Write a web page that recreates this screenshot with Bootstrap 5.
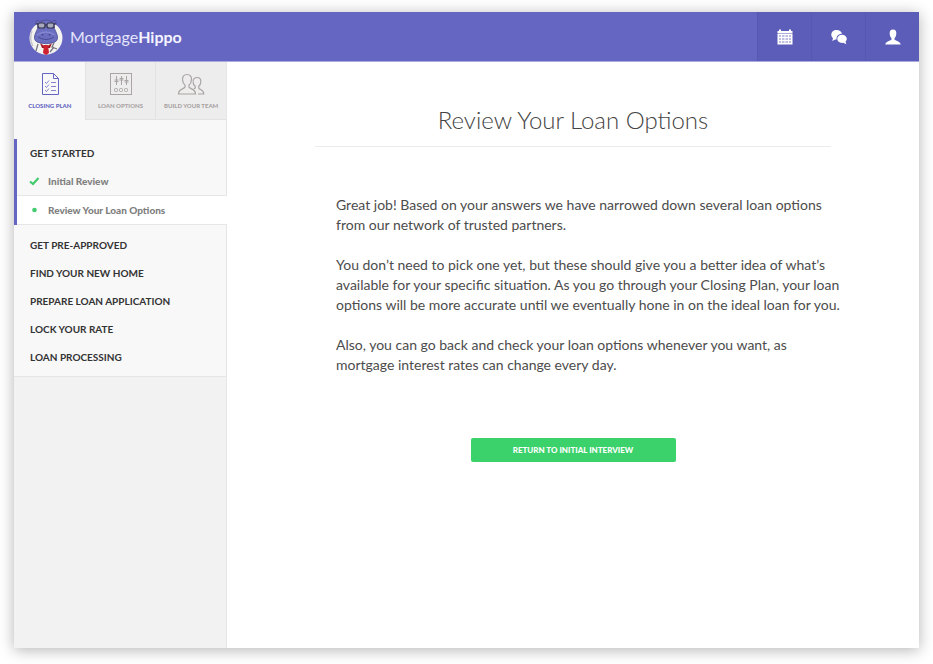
<!DOCTYPE html>
<html lang="en">
<head>
<meta charset="utf-8">
<meta name="viewport" content="width=device-width, initial-scale=1">
<title>MortgageHippo - Review Your Loan Options</title>
<link href="https://cdn.jsdelivr.net/npm/bootstrap@5.3.0/dist/css/bootstrap.min.css" rel="stylesheet">
<style>
body { font-family: Lato, "Open Sans", sans-serif; background: #fff; color: #4c4c4c; }
.app-shell { min-height: calc(100vh - 28px); margin: 12px 14px 16px; box-shadow: 0 2px 14px rgba(0,0,0,.3); background: #fff; }
.topbar { background: #6466c2; height: 50px; border-bottom: 1px solid #a9aae0; }
.brand { color: #e4e4fa; font-size: 16px; font-weight: 400; gap: 6px; padding-left: 14px; }
.brand:hover { color: #fff; }
.brand b { font-weight: 700; color: #f4f4ff; }
.top-action { width: 54px; background: #5c5db9; border: 0; border-left: 1px solid #5657b0; color: #fff; padding: 0 0 2px; }
.side { width: 213px; background: #f2f2f2; border-right: 1px solid #e6e6e6; }
.tab-link { height: 58px; gap: 6px; padding-top: 10px; background: #ededed; border-left: 1px solid #e2e2e2; border-bottom: 1px solid #e2e2e2; color: #aaa4a4; font-size: 6px; line-height: 8px; font-weight: 900; white-space: nowrap; }
.tab-link.current { background: #f8f8f8; border-color: #f8f8f8; color: #6466c2; }
.plan { background: #f8f8f8; border-bottom: 1px solid #e6e6e6; padding: 19px 0 5px; }
.stage-open { border-left: 3px solid #6466c2; margin-right: -1px; }
.stage { display: block; padding: 0 16px; font-size: 10px; line-height: 28px; font-weight: 700; color: #333; text-decoration: none; }
.stage-open .stage { padding-left: 13px; }
.step { height: 28px; gap: 8px; padding-left: 12px; font-size: 10px; font-weight: 900; color: #808080; }
.step.current { height: 30px; background: #fff; border-top: 1px solid #e6e6e6; border-bottom: 1px solid #e6e6e6; }
.later { padding-top: 6px; }
.panel { max-width: 516px; padding-top: 43px; margin-right: 87px; }
.panel h1 { font-size: 24px; line-height: 30px; font-weight: 300; color: #444; padding-bottom: 11px; border-bottom: 1px solid #ececec; }
.copy { padding: 48px 0 0 21px; margin-right: -16px; font-size: 14px; line-height: 20px; }
.copy p { margin-bottom: 20px; }
.btn-return { width: 205px; height: 24px; margin-top: 43px; padding: 0; border: 0; border-radius: 2px; background: #3bd16b; color: #fff; font-size: 8px; line-height: 24px; font-weight: 900; }
.btn-return:hover { background: #32bd5f; color: #fff; }
</style>
<script src="https://cdn.jsdelivr.net/npm/bootstrap@5.3.0/dist/js/bootstrap.bundle.min.js"></script>
</head>
<body>
<div class="app-shell d-flex flex-column">
  <header class="topbar d-flex align-items-stretch">
    <a href="#" class="brand d-flex align-items-center text-decoration-none me-auto">
      <svg width="36" height="38" viewBox="0 0 36 38" aria-hidden="true">
        <circle cx="18" cy="20" r="16.500" fill="#f4f3f0"/>
        <path d="M4 13Q1 21 5 28" fill="none" stroke="#c9c7cc" stroke-width="1.500"/>
        <path d="M10 26L8 33M26 25L24 29L29 31M22 34L26 29" fill="none" stroke="#77747e" stroke-width="1.300"/>
        <path d="M12 25L18 29L24 25L22 30H14Z" fill="#a31a27"/>
        <path d="M16 27H20L21 35L18 37L15 35Z" fill="#cf2231"/>
        <path d="M10 7Q6 2 10 2.500L12 4Q18 0 24 4L26 2.500Q30 2 26 7Q26 11 28 14Q32 22 26 24.500Q18 27 10 24.500Q4 22 8 14Q10 11 10 7Z" fill="#6c6ec0" stroke="#4a4c94" stroke-width=".8"/>
        <path d="M9 17Q18 11 27 17" fill="none" stroke="#8486d0" stroke-width="1.500"/>
        <path d="M10 19Q18 24 26 19" fill="none" stroke="#4a4c94" stroke-width="1"/>
        <path d="M14.500 16v1.500M21.500 16v1.500" stroke="#3f4188" stroke-width="1.500"/>
        <rect x="10" y="5" width="7" height="5" rx="2" fill="#a9a9bd" stroke="#33334c" stroke-width="1.200"/>
        <rect x="19" y="5" width="7" height="5" rx="2" fill="#a9a9bd" stroke="#33334c" stroke-width="1.200"/>
        <path d="M17 7h2M7.500 6h2.500M26 6h2.500" stroke="#33334c" stroke-width="1.200"/>
      </svg>
      <span>Mortgage<b>Hippo</b></span>
    </a>
    <button type="button" class="top-action" aria-label="Calendar">
      <svg width="16" height="16" viewBox="0 0 16 16" fill="currentColor"><path d="M.5 2H2V.5h2V2h8V.500h2V2h1.500v2.500H.5Z"/><path fill-rule="evenodd" d="M.5 5h15v10.500H.5ZM2 6v2h2V6ZM5 6v2h2.500V6ZM8.500 6v2H11V6ZM12 6v2h2V6ZM2 9v2h2V9ZM5 9v2h2.500V9ZM8.500 9v2H11V9ZM12 9v2h2V9ZM2 12v2h2v-2ZM5 12v2h2.500v-2ZM8.500 12v2H11v-2ZM12 12v2h2v-2Z" /><path d="M2 6h12v8H2Z" opacity=".6"/></svg>
    </button>
    <button type="button" class="top-action" aria-label="Messages">
      <svg width="16" height="16" viewBox="0 0 16 16" fill="currentColor"><path d="M5.500 1C2.500 1 .3 3 .3 5.700c0 1.500.7 2.700 1.700 3.500L1.200 12l3-1.500h1.300C5.400 7 7.600 4.800 11 4.800 10.500 2.500 8.300 1 5.500 1Z"/><path d="M11 5.700c-2.700 0-4.700 1.800-4.700 4.100S8.300 14 11 14l1.300-.2 3 1.500-.8-2.700c.8-.7 1.300-1.700 1.300-2.800 0-2.300-2.100-4.100-4.800-4.100Z"/></svg>
    </button>
    <button type="button" class="top-action" aria-label="Account">
      <svg width="16" height="16" viewBox="0 0 16 16" fill="currentColor"><path d="M8 .5C5.700.5 4.500 2 4.700 4.500c.1 2 .7 3.600 1.800 4.700v1.300c-.7 1.300-5.700 1.500-6.200 5h15.400c-.5-3.500-5.500-3.700-6.200-5V9.200c1.100-1.100 1.700-2.700 1.800-4.700C11.500 2 10.300.500 8 .500Z"/></svg>
    </button>
  </header>

  <div class="d-flex flex-grow-1">
    <aside class="side flex-shrink-0">
      <nav class="d-flex" aria-label="Sections">
        <a href="#" class="tab-link current d-flex flex-column align-items-center text-decoration-none flex-fill w-100" aria-current="page">
          <svg width="24" height="24" viewBox="0 0 24 24" fill="none" stroke="currentColor"><path d="M4.500 1.500h11l5 5v16h-16ZM15.500 1.500v5h5"/><path d="M7 10l1.500 1.500L11 8.500M7 14l1.500 1.500L11 12.500M7 18l1.500 1.500L11 16.500M13 10.500h5M13 14.500h5M13 18.500h5" stroke-width=".8"/></svg>
          <span>CLOSING PLAN</span>
        </a>
        <a href="#" class="tab-link d-flex flex-column align-items-center text-decoration-none flex-fill w-100">
          <svg width="24" height="24" viewBox="0 0 24 24" fill="none" stroke="currentColor"><rect x="1.500" y="1.500" width="21" height="21"/><path d="M7.500 4v9M12.500 4v9M17.500 4v9M5.500 8h4M10.500 6.500h4M15.500 10h4M5.500 9.500h4M10.500 8h4M15.500 8.500h4"/><rect x="5.500" y="16.500" width="3" height="3" rx="1"/><rect x="10.500" y="16.500" width="3" height="3" rx="1"/><rect x="15.500" y="16.500" width="3" height="3" rx="1"/></svg>
          <span>LOAN OPTIONS</span>
        </a>
        <a href="#" class="tab-link d-flex flex-column align-items-center text-decoration-none flex-fill w-100">
          <svg width="28" height="24" viewBox="0 0 28 24" fill="none" stroke="currentColor" stroke-width="1.200"><path d="M10 2.500c-3 0-4.700 2-4.500 5 .1 2.500 1 4.500 2.500 5.500v2c-.5 2-6.500 1.500-6.500 7h17c0-5.500-6-5-6.500-7v-2c1.500-1 2.400-3 2.500-5.500.2-3-1.500-5-4.500-5Z"/><path d="M16 9c.5-2.300 2-3.500 4-3.500 2.700 0 4 1.800 3.800 4.200-.1 2-.8 3.500-2 4.500V16c.5 1.800 5 1.500 5 6H21M16 9.500c0 2 .8 3.700 2.200 4.700V16l-1.500 1"/></svg>
          <span>BUILD YOUR TEAM</span>
        </a>
      </nav>
      <nav class="plan" aria-label="Closing plan">
        <div class="stage-open">
          <a href="#" class="stage">GET STARTED</a>
          <a href="#" class="step d-flex align-items-center text-decoration-none">
            <svg width="11" height="10" viewBox="0 0 11 10" fill="none" stroke="#43cb70" stroke-width="2.200"><path d="M1 5.500L4 8L9.500 2"/></svg>
            Initial Review
          </a>
          <a href="#" class="step current d-flex align-items-center text-decoration-none" aria-current="step">
            <svg width="11" height="10" viewBox="0 0 11 10" fill="#43cb70"><circle cx="5.500" cy="5" r="2.300"/></svg>
            Review Your Loan Options
          </a>
        </div>
        <div class="later">
          <a href="#" class="stage">GET PRE-APPROVED</a>
          <a href="#" class="stage">FIND YOUR NEW HOME</a>
          <a href="#" class="stage">PREPARE LOAN APPLICATION</a>
          <a href="#" class="stage">LOCK YOUR RATE</a>
          <a href="#" class="stage">LOAN PROCESSING</a>
        </div>
      </nav>
    </aside>

    <main class="flex-grow-1">
      <div class="panel mx-auto">
        <h1 class="text-center mb-0">Review Your Loan Options</h1>
        <div class="copy">
          <p>Great job! Based on your answers we have narrowed down several loan options from our network of trusted partners.</p>
          <p>You don’t need to pick one yet, but these should give you a better idea of what’s available for your specific situation. As you go through your Closing Plan, your loan options will be more accurate until we eventually hone in on the ideal loan for you.</p>
          <p>Also, you can go back and check your loan options whenever you want, as mortgage interest rates can change every day.</p>
        </div>
        <div class="text-center"><button type="button" class="btn btn-return">RETURN TO INITIAL INTERVIEW</button></div>
      </div>
    </main>
  </div>
</div>
</body>
</html>
